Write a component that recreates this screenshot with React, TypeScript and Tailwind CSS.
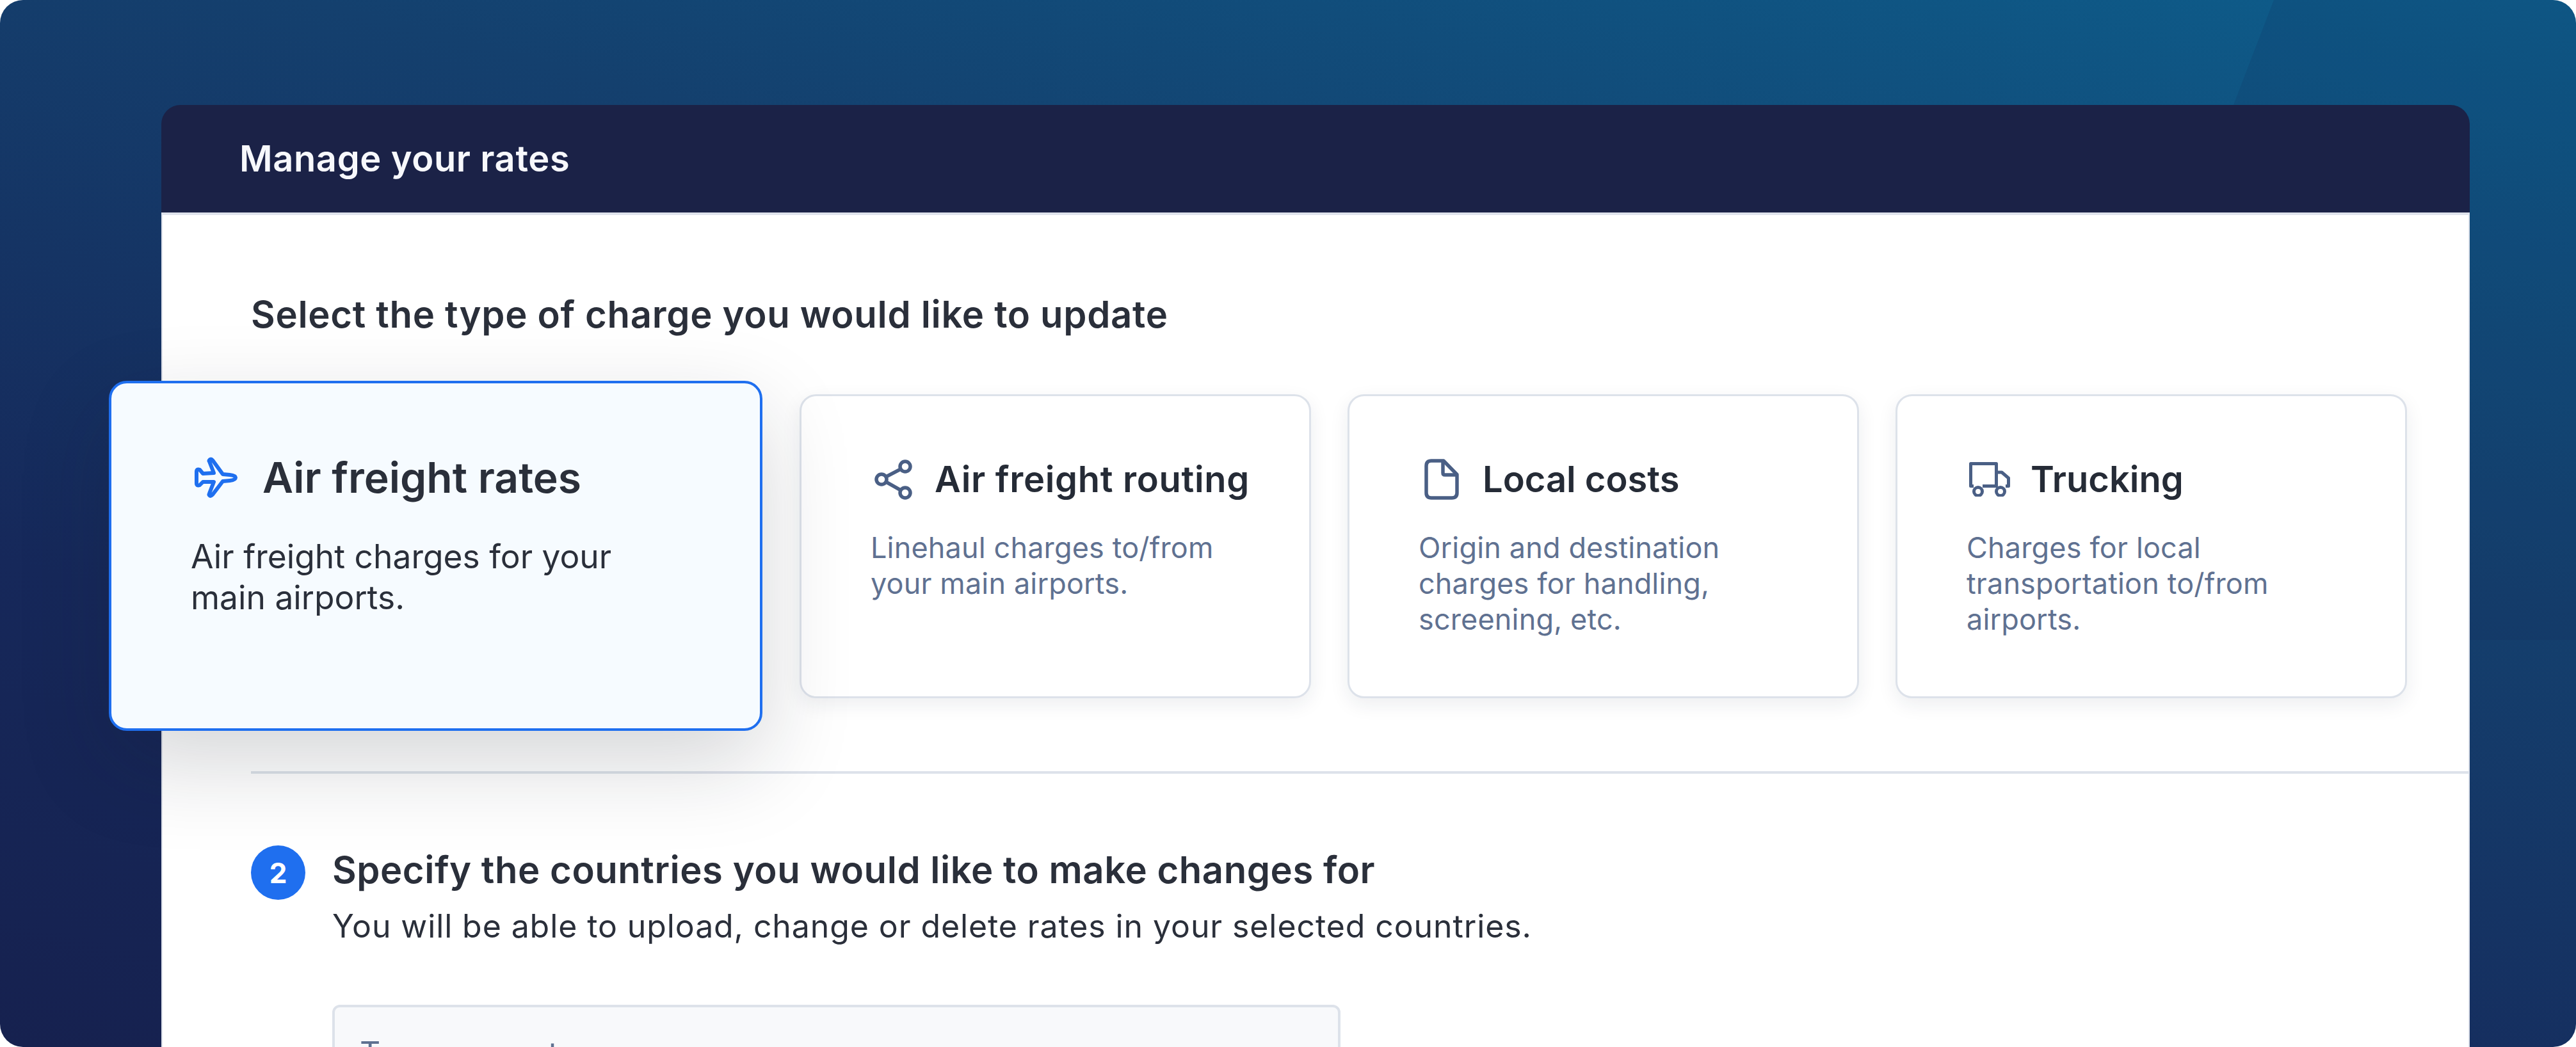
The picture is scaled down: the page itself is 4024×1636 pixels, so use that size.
const font = { fontFamily: 'Inter, sans-serif' };

function Plane() {
  return (
    <svg width="68" height="64" viewBox="0 0 68 64" fill="none" stroke="#1f6fef" strokeWidth="6" strokeLinejoin="round" className="shrink-0 ml-[5px]">
      <path d="M24 5 Q26 2 29 5 L45 27 L56 28 Q65 29 65 32 Q65 36 56 37 L45 38 L29 59 Q26 62 24 60 Q23 59 24 57 L31 39 L14 39 L9 44 Q4 46 4 41 V23 Q4 18 9 20 L14 26 L31 25 L24 7 Q23 6 24 5 Z" />
    </svg>
  );
}
function Share() {
  return (
    <svg width="60" height="64" viewBox="0 0 60 64" fill="none" stroke="#4a5f85" strokeWidth="5.5" className="shrink-0 ml-[4px]">
      <circle cx="11" cy="32" r="8" />
      <circle cx="48" cy="12" r="8" />
      <circle cx="48" cy="53" r="8" />
      <path d="M18 28 L41 16 M18 36 L41 49" />
    </svg>
  );
}
function FileIcon() {
  return (
    <svg width="54" height="64" viewBox="0 0 54 64" fill="none" stroke="#4a5f85" strokeWidth="5.5" strokeLinejoin="round" className="shrink-0 ml-[7px]">
      <path d="M11 3 H30 L51 24.5 V53 Q51 61 43 61 H11 Q3 61 3 53 V11 Q3 3 11 3 Z" />
      <path d="M29 3 V22 Q29 25 32 25 H51" />
    </svg>
  );
}
function Truck() {
  return (
    <svg width="66" height="54" viewBox="0 0 66 54" fill="none" stroke="#4a5f85" strokeWidth="5" strokeLinejoin="round" className="shrink-0 ml-[2px]">
      <path d="M7 37.5 H2.5 V2.5 H42.5 V37.5 H21" />
      <path d="M42.5 16 H51 L61.5 25 V37.5 H57" />
      <circle cx="14" cy="46" r="6.5" />
      <circle cx="49" cy="46" r="6.5" />
    </svg>
  );
}

function Card({ icon, title, lines, gap, track }: { icon: React.ReactNode; title: string; lines: string[]; gap: string; track: string }) {
  return (
    <div className="w-[799px] h-[475px] shrink-0 rounded-[26px] border-[3px] border-[#dde2ea] bg-white pt-[96px] pl-[110px] shadow-[0_10px_30px_rgba(30,40,60,0.08)]">
      <div className={`flex items-center h-[68px] ${gap}`}>
        {icon}
        <span className={`text-[56px] leading-none font-semibold text-[#252b36] whitespace-nowrap ${track}`}>{title}</span>
      </div>
      <div className="mt-[45px] -ml-[2px] text-[45px] leading-[56px] tracking-[0.15px] text-[#5f7191]">
        {lines.map((l) => (
          <div key={l} className="whitespace-nowrap">{l}</div>
        ))}
      </div>
    </div>
  );
}

export default function App() {
  return (
    <div className="w-[4024px] h-[1636px] bg-white overflow-hidden" style={font}>
      <div className="relative w-full h-full rounded-[36px] overflow-hidden bg-[linear-gradient(195deg,#0d5e8c_0%,#14406e_35%,#16285a_72%,#16214f_100%)] pt-[164px] pl-[252px]">
        <div className="absolute right-0 top-0 w-[872px] h-[1000px] bg-[#16285a]/15 [clip-path:polygon(400px_0,100%_0,100%_100%,16px_100%)]" />
        <div className="relative w-[3606px] h-[1472px]">
          <div className="h-[172px] rounded-t-[30px] bg-[#1b2247] border-b-[4px] border-[#dfe3ec] flex items-center pl-[122px]">
            <span className="text-[56px] leading-none font-semibold tracking-[0.6px] text-[#f7f8fc]">Manage your rates</span>
          </div>
          <div className="h-[1300px] bg-white border-x-[2px] border-[#dfe3ec] pl-[138px]">
            <div className="pt-[120px] text-[58px] leading-[70px] font-semibold tracking-[0.7px] text-[#2a2f3a]">
              Select the type of charge you would like to update
            </div>
            <div className="mt-[90px] flex gap-[57px] h-[475px]">
              <div className="w-[1021px] h-[547px] shrink-0 -ml-[222px] mr-[1px] -mt-[21px] relative z-10 rounded-[28px] border-[4px] border-[#1f6fef] bg-[#f6fbff] pt-[109px] pl-[124px] shadow-[0_50px_140px_rgba(20,30,40,0.18)]">
                <div className="flex items-center gap-[39px] h-[76px]">
                  <Plane />
                  <span className="text-[66px] leading-none font-semibold text-[#2a2f3a] whitespace-nowrap">Air freight rates</span>
                </div>
                <div className="mt-[53px] text-[51.5px] leading-[64px] text-[#2a2f3a]">
                  <div>Air freight charges for your</div>
                  <div>main airports.</div>
                </div>
              </div>
              <Card icon={<Share />} title="Air freight routing" gap="gap-[34px]" track="tracking-[0.7px]" lines={["Linehaul charges to/from", "your main airports."]} />
              <Card icon={<FileIcon />} title="Local costs" gap="gap-[37px]" track="tracking-normal" lines={["Origin and destination", "charges for handling,", "screening, etc."]} />
              <Card icon={<Truck />} title="Trucking" gap="gap-[30px]" track="tracking-normal" lines={["Charges for local", "transportation to/from", "airports."]} />
            </div>
            <div className="mt-[114px] h-[4px] bg-[#dde2ea]" />
            <div className="mt-[112px] flex gap-[42px]">
              <div className="w-[85px] h-[85px] shrink-0 rounded-full bg-[#1f6fef] flex items-center justify-center text-white text-[44px] font-bold">2</div>
              <div className="pt-[4px]">
                <div className="text-[58px] leading-[68px] font-semibold tracking-[0.55px] text-[#2a2f3a]">Specify the countries you would like to make changes for</div>
                <div className="mt-[22px] text-[50px] leading-[64px] tracking-[0.9px] text-[#2a2f3a]">You will be able to upload, change or delete rates in your selected countries.</div>
                <div className="mt-[91px] w-[1575px] h-[200px] rounded-[12px] border-[4px] border-[#dde2ea] bg-[#f8f9fb] pt-[40px] pl-[39px] text-[50px] leading-[64px] tracking-[0.3px] text-[#5f7191]">Type a country</div>
              </div>
            </div>
          </div>
        </div>
      </div>
    </div>
  );
}
